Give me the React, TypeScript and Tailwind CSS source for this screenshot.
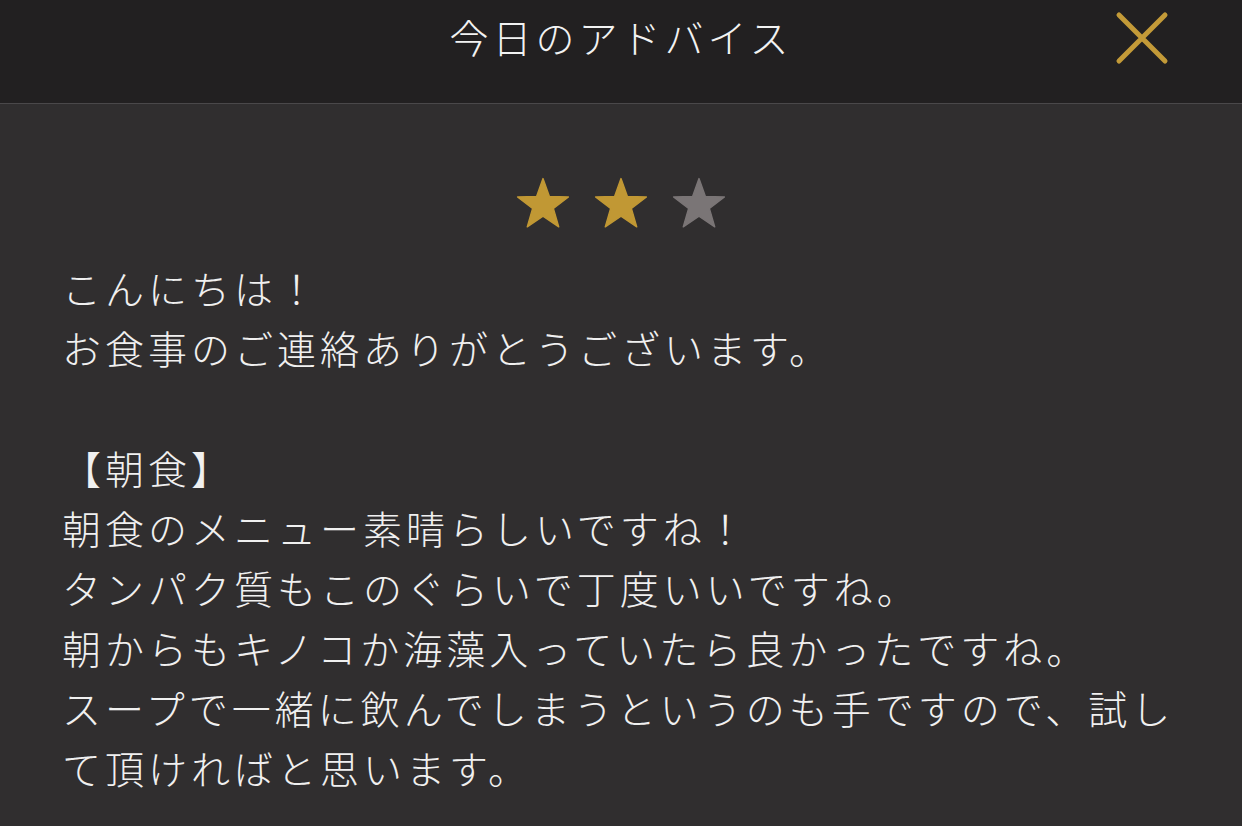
import React from "react";

const Star = ({ color }: { color: string }) => (
  <svg width="56" height="54" viewBox="0 0 24 23" fill={color}>
    <path d="M12 0.6 L14.75 8.3 L22.9 8.45 L16.45 13.45 L18.75 21.3 L12 16.7 L5.25 21.3 L7.55 13.45 L1.1 8.45 L9.25 8.3 Z" strokeLinejoin="round" stroke={color} strokeWidth="0.6" />
  </svg>
);

export default function App() {
  const lines = [
    "こんにちは！",
    "お食事のご連絡ありがとうございます。",
    "",
    "【朝食】",
    "朝食のメニュー素晴らしいですね！",
    "タンパク質もこのぐらいで丁度いいですね。",
    "朝からもキノコか海藻入っていたら良かったですね。",
    "スープで一緒に飲んでしまうというのも手ですので、試して頂ければと思います。",
  ];
  return (
    <div
      className="w-[1242px] h-[826px] overflow-hidden bg-[#302e2f] flex flex-col"
      style={{ fontFamily: '"Noto Sans CJK JP", "Noto Sans", sans-serif' }}
    >
      <header className="h-[104px] shrink-0 bg-[#222021] border-b border-[#4a484a] relative flex justify-center">
        <h1 className="mt-[10px] h-[52px] leading-[52px] text-[39px] font-light tracking-[4px] text-[#f2f2f2]">
          今日のアドバイス
        </h1>
        <button className="absolute left-[1114px] top-[10px] w-[56px] h-[56px] flex items-center justify-center">
          <svg width="56" height="56" viewBox="0 0 56 56">
            <path d="M5 5 L51 51 M51 5 L5 51" stroke="#c39a38" strokeWidth="5" strokeLinecap="round" />
          </svg>
        </button>
      </header>
      <main className="px-[62px] pt-[73px]">
        <div className="flex justify-center gap-[22px]">
          <Star color="#c19834" />
          <Star color="#c19834" />
          <Star color="#7a7576" />
        </div>
        <div className="mt-[26px] text-[39px] leading-[60px] font-light tracking-[4px] text-[#f0f0f0]">
          {lines.map((l, i) => (
            <p key={i} className="min-h-[60px]">
              {l}
            </p>
          ))}
        </div>
      </main>
    </div>
  );
}
